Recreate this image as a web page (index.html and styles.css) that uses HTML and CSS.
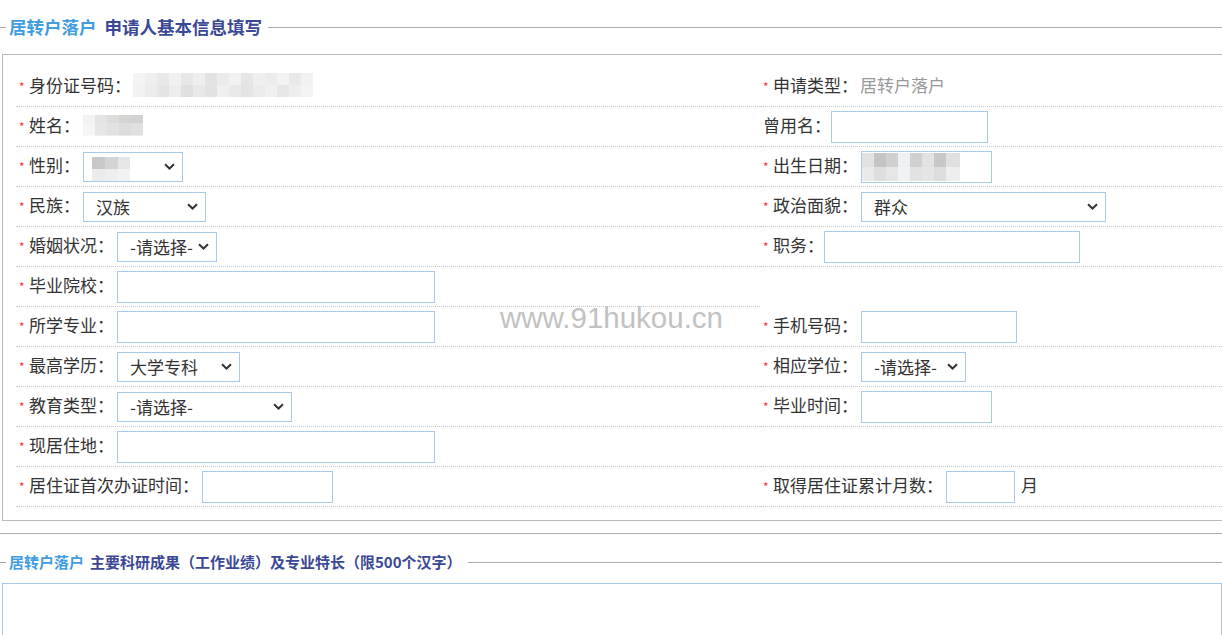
FILE: index.html
```html
<!DOCTYPE html>
<html lang="zh-CN">
<head>
  <meta charset="UTF-8" />
  <title>居转户落户 - 申请人基本信息填写</title>
  <meta name="viewport" content="width=device-width, initial-scale=1.0" />
  <link rel="stylesheet" href="styles.css">
</head>
<body>

  <!-- 基本信息 -->
  <div class="section">
    <div class="sec-title">
      <span class="sec-line-short"></span>
      <span class="sec-text"><span class="blue">居转户落户</span><span class="dark">申请人基本信息填写</span></span>
      <span class="sec-line"></span>
    </div>

    <div class="box">
      <div class="row">
        <div class="cell left"><span class="star">*</span><span class="label">身份证号码：</span><span class="mosaic m-id"></span></div>
        <div class="cell"><span class="star">*</span><span class="label">申请类型：</span><span class="value">居转户落户</span></div>
      </div>
      <div class="row">
        <div class="cell left"><span class="star">*</span><span class="label">姓名：</span><span class="mosaic m-name"></span></div>
        <div class="cell"><span class="label">曾用名：</span><input class="ipt tight w157" type="text" /></div>
      </div>
      <div class="row">
        <div class="cell left"><span class="star">*</span><span class="label">性别：</span>
          <span class="pick"><select class="sel w100"><option></option></select><span class="mosaic m-sex"></span></span>
        </div>
        <div class="cell"><span class="star">*</span><span class="label">出生日期：</span>
          <span class="pick"><input class="ipt w131" type="text" /><span class="mosaic m-birth"></span></span>
        </div>
      </div>
      <div class="row">
        <div class="cell left"><span class="star">*</span><span class="label">民族：</span><select class="sel w123"><option>汉族</option></select></div>
        <div class="cell"><span class="star">*</span><span class="label">政治面貌：</span><select class="sel w245"><option>群众</option></select></div>
      </div>
      <div class="row">
        <div class="cell left"><span class="star">*</span><span class="label">婚姻状况：</span><select class="sel w100"><option>-请选择-</option></select></div>
        <div class="cell"><span class="star">*</span><span class="label">职务：</span><input class="ipt tight w256" type="text" /></div>
      </div>
      <div class="row">
        <div class="cell left"><span class="star">*</span><span class="label">毕业院校：</span><input class="ipt w318" type="text" /></div>
        <div class="cell no-line"></div>
      </div>
      <div class="row">
        <div class="cell left"><span class="star">*</span><span class="label">所学专业：</span><input class="ipt w318" type="text" /></div>
        <div class="cell"><span class="star">*</span><span class="label">手机号码：</span><input class="ipt w156" type="text" /></div>
      </div>
      <div class="row">
        <div class="cell left"><span class="star">*</span><span class="label">最高学历：</span><select class="sel w123"><option>大学专科</option></select></div>
        <div class="cell"><span class="star">*</span><span class="label">相应学位：</span><select class="sel w105"><option>-请选择-</option></select></div>
      </div>
      <div class="row">
        <div class="cell left"><span class="star">*</span><span class="label">教育类型：</span><select class="sel w175"><option>-请选择-</option></select></div>
        <div class="cell"><span class="star">*</span><span class="label">毕业时间：</span><input class="ipt w131" type="text" /></div>
      </div>
      <div class="row">
        <div class="cell left"><span class="star">*</span><span class="label">现居住地：</span><input class="ipt w318" type="text" /></div>
        <div class="cell"></div>
      </div>
      <div class="row">
        <div class="cell left"><span class="star">*</span><span class="label">居住证首次办证时间：</span><input class="ipt w131" type="text" /></div>
        <div class="cell"><span class="star">*</span><span class="label">取得居住证累计月数：</span><input class="ipt w69" type="text" /><span class="label unit">月</span></div>
      </div>
    </div>
  </div>

  <!-- 科研成果 -->
  <div class="section2">
    <div class="sec-title small">
      <span class="sec-line-short"></span>
      <span class="sec-text"><span class="blue">居转户落户</span><span class="dark">主要科研成果（工作业绩）及专业特长（限500个汉字）</span></span>
      <span class="sec-line"></span>
    </div>
    <textarea class="big-text"></textarea>
  </div>

  <div class="watermark">www.91hukou.cn</div>

</body>
</html>
```

FILE: styles.css
```css
body {
  font-family: "Noto Sans CJK SC", "Microsoft YaHei", sans-serif;
  background-color: #fff;
  color: #333;
  margin: 0;
  padding: 0;
  overflow: hidden;
  position: relative;
}

.section {
  border-bottom: 1px solid #aaa;
  padding-bottom: 12px;
}

.sec-title {
  display: flex;
  align-items: center;
  height: 22px;
  margin-top: 16px;
  font-size: 17.5px;
  font-weight: bold;
  color: #3b4895;
}
.sec-title.small {
  font-size: 15px;
  margin-top: 17px;
}
.sec-line-short {
  width: 6px;
  height: 1px;
  background: #aaa;
  margin-right: 3px;
}
.sec-line {
  flex: 1;
  height: 1px;
  background: #aaa;
  margin-left: 6px;
}
.sec-text {
  white-space: nowrap;
  line-height: 22px;
}
.blue {
  color: #409de0;
}
.dark {
  margin-left: 8px;
}
.sec-title.small .dark {
  margin-left: 6px;
}

.box {
  margin: 16px 0 0 2px;
  border: 1px solid #bbb;
  border-right: none;
  padding: 12px 0 13px 13px;
}

.row {
  display: flex;
}
.cell {
  flex: 1;
  display: flex;
  align-items: center;
  height: 40px;
  box-sizing: border-box;
  padding-left: 3px;
  border-bottom: 1px dotted #c8c8c8;
  font-size: 17px;
  white-space: nowrap;
}
.cell.left {
  flex: 0 0 744px;
}
.cell.no-line {
  border-bottom-color: transparent;
}

.star {
  color: #f33;
  font-size: 12px;
  line-height: 1;
  padding-top: 1px;
  margin-right: 4px;
  width: 6px;
}
.label {
  color: #333;
  padding-bottom: 5px;
}
.value {
  color: #999;
  margin-left: 2px;
  padding-bottom: 5px;
}
.unit {
  margin-left: 6px;
}

.ipt {
  height: 32px;
  box-sizing: border-box;
  border: 1px solid #a9c9e9;
  border-radius: 0;
  padding: 0 8px;
  margin: 0 0 0 3px;
  font-size: 17px;
  font-family: inherit;
  background: #fff;
  outline: none;
}
.ipt.tight {
  margin-left: 0;
}
.sel {
  -webkit-appearance: none;
  appearance: none;
  height: 30px;
  box-sizing: border-box;
  border: 1px solid #a9c9e9;
  border-radius: 0;
  padding: 0 20px 0 12px;
  margin: 0 0 0 3px;
  font-size: 17px;
  font-family: inherit;
  color: #333;
  background: #fff url("data:image/svg+xml,%3Csvg xmlns='http://www.w3.org/2000/svg' width='11' height='7'%3E%3Cpath d='M1 1.2l4.5 4.3 4.5-4.3' fill='none' stroke='%23333' stroke-width='2'/%3E%3C/svg%3E") no-repeat right 7px center;
  outline: none;
}

.w69 { width: 69px; }
.w100 { width: 100px; }
.w105 { width: 105px; }
.w123 { width: 123px; }
.w131 { width: 131px; }
.w156 { width: 156px; }
.w157 { width: 157px; }
.w175 { width: 175px; }
.w245 { width: 245px; }
.w256 { width: 256px; }
.w318 { width: 318px; }

/* 打码的个人信息 */
.pick {
  position: relative;
  display: inline-flex;
}
.mosaic {
  display: inline-block;
  filter: blur(0.6px);
}
.m-id {
  width: 180px;
  height: 24px;
  margin: 0 0 4px 2px;
  background:
    linear-gradient(90deg, #f4f4f4 0 12px, #efefef 12px 24px, #e9e9e9 24px 36px, #f1f1f1 36px 48px, #e7e7e7 48px 60px, #eeeeee 60px 72px, #e3e3e3 72px 84px, #ebebeb 84px 96px, #f2f2f2 96px 108px, #e6e6e6 108px 120px, #efefef 120px 132px, #ececec 132px 144px, #f3f3f3 144px 156px, #e9e9e9 156px 168px, #f2f2f2 168px 180px) top / 100% 50% no-repeat,
    linear-gradient(90deg, #f2f2f2 0 12px, #ececec 12px 24px, #e5e5e5 24px 36px, #ededed 36px 48px, #e0e0e0 48px 60px, #e8e8e8 60px 72px, #e2e2e2 72px 84px, #f0f0f0 84px 96px, #e9e9e9 96px 108px, #e4e4e4 108px 120px, #ebebeb 120px 132px, #f0f0f0 132px 144px, #e7e7e7 144px 156px, #eeeeee 156px 168px, #f4f4f4 168px 180px) bottom / 100% 50% no-repeat;
}
.m-name {
  width: 60px;
  height: 21px;
  margin: 0 0 3px 3px;
  background:
    linear-gradient(90deg, #f2f2f2 0 12px, #e4e4e4 12px 24px, #dcdcdc 24px 36px, #d6d4d0 36px 48px, #d2d2d2 48px 60px) top / 100% 40% no-repeat,
    linear-gradient(90deg, #f5f5f5 0 12px, #e6e6e6 12px 24px, #e2e2e2 24px 36px, #dcdcdc 36px 48px, #e0e0e0 48px 60px) bottom / 100% 60% no-repeat;
}
.m-sex {
  position: absolute;
  left: 12px;
  top: 5px;
  width: 38px;
  height: 24px;
  background:
    linear-gradient(90deg, #c8c8c8 0 13px, #d4d4d4 13px 26px, #e6e6e6 26px 38px) top / 100% 50% no-repeat,
    linear-gradient(90deg, #ececec 0 13px, #eeeeee 13px 26px, #f2f2f2 26px 38px) bottom / 100% 50% no-repeat;
}
.m-birth {
  position: absolute;
  left: 4px;
  top: 2px;
  width: 98px;
  height: 28px;
  background:
    linear-gradient(90deg, #e2e2e2 0 12px, #c4c4c4 12px 24px, #d2d0ce 24px 36px, #eef1f4 36px 48px, #d0d0d0 48px 60px, #e2e2e0 60px 72px, #c8c8c8 72px 84px, #e0e0e0 84px 98px) top / 100% 50% no-repeat,
    linear-gradient(90deg, #eaeaea 0 12px, #dedede 12px 24px, #e6e6e6 24px 36px, #f0f2f4 36px 48px, #e2e2e2 48px 60px, #e6e6e6 60px 72px, #dddddd 72px 84px, #eeeeee 84px 98px) bottom / 100% 50% no-repeat;
}

.big-text {
  display: block;
  width: calc(100% - 2px);
  height: 90px;
  margin: 10px 0 0 2px;
  box-sizing: border-box;
  border: 1px solid #a9c9e9;
  resize: none;
  outline: none;
}

.watermark {
  position: absolute;
  left: 500px;
  top: 301px;
  font-family: "Liberation Sans", Arial, sans-serif;
  font-size: 29.5px;
  line-height: 34px;
  color: #c2c2c2;
  pointer-events: none;
}
```
